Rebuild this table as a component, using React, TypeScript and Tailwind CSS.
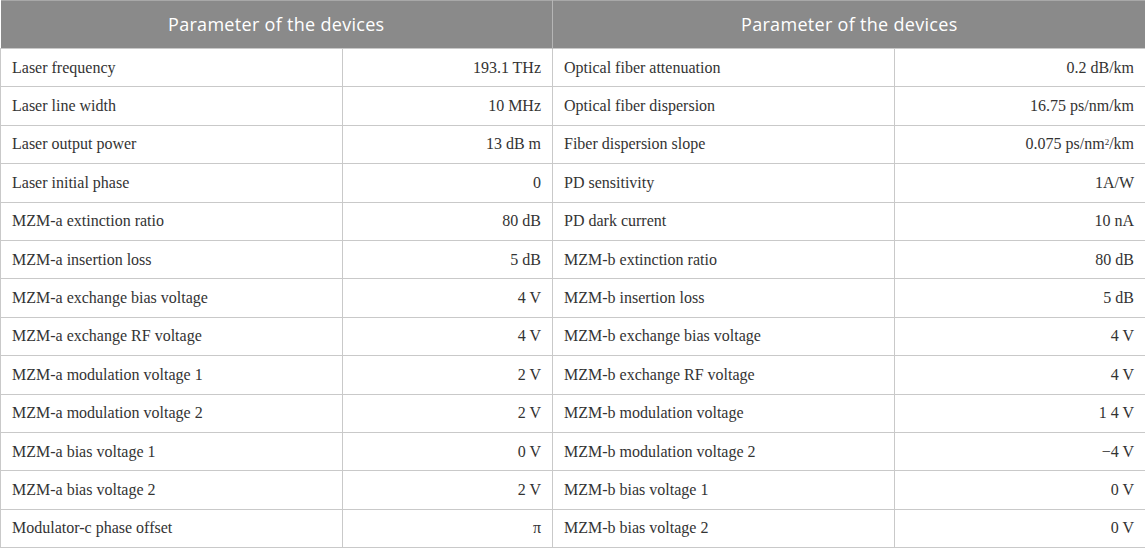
const rows: [string, string, string, React.ReactNode][] = [
  ['Laser frequency', '193.1 THz', 'Optical fiber attenuation', '0.2 dB/km'],
  ['Laser line width', '10 MHz', 'Optical fiber dispersion', '16.75 ps/nm/km'],
  [
    'Laser output power',
    '13 dB m',
    'Fiber dispersion slope',
    <>
      0.075 ps/nm<sup className="text-[9px]">2</sup>/km
    </>,
  ],
  ['Laser initial phase', '0', 'PD sensitivity', '1A/W'],
  ['MZM-a extinction ratio', '80 dB', 'PD dark current', '10 nA'],
  ['MZM-a insertion loss', '5 dB', 'MZM-b extinction ratio', '80 dB'],
  ['MZM-a exchange bias voltage', '4 V', 'MZM-b insertion loss', '5 dB'],
  ['MZM-a exchange RF voltage', '4 V', 'MZM-b exchange bias voltage', '4 V'],
  ['MZM-a modulation voltage 1', '2 V', 'MZM-b exchange RF voltage', '4 V'],
  ['MZM-a modulation voltage 2', '2 V', 'MZM-b modulation voltage', '1 4 V'],
  ['MZM-a bias voltage 1', '0 V', 'MZM-b modulation voltage 2', '\u22124 V'],
  ['MZM-a bias voltage 2', '2 V', 'MZM-b bias voltage 1', '0 V'],
  ['Modulator-c phase offset', '\u03c0', 'MZM-b bias voltage 2', '0 V'],
];

export default function App() {
  return (
    <div className="w-[1145px] h-[549px] bg-white overflow-hidden">
      <table className="w-[1145px] border-collapse table-fixed">
        <colgroup>
          <col className="w-[342px]" />
          <col className="w-[210px]" />
          <col className="w-[342px]" />
          <col className="w-[251px]" />
        </colgroup>
        <thead>
          <tr className="h-[48px] bg-[#8a8a8a]">
            <th
              colSpan={2}
              className="border-r border-[#b5b5b5] border-t border-t-[#a8a8a8] text-center font-normal text-white text-[18px] tracking-[0.3px]"
              style={{ fontFamily: '"Open Sans", "Noto Sans", sans-serif' }}
            >
              Parameter of the devices
            </th>
            <th
              colSpan={2}
              className="text-center border-t border-t-[#a8a8a8] font-normal text-white text-[18px] tracking-[0.3px]"
              style={{ fontFamily: '"Open Sans", "Noto Sans", sans-serif' }}
            >
              Parameter of the devices
            </th>
          </tr>
        </thead>
        <tbody
          className="text-[16px] text-[#333333]"
          style={{ fontFamily: '"Liberation Serif", "DejaVu Serif", serif' }}
        >
          {rows.map((r, i) => (
            <tr key={i} className="h-[38.4px]">
              <td className="border border-[#c9c9c9] px-[11px] text-left">{r[0]}</td>
              <td className="border border-[#c9c9c9] px-[11px] text-right">{r[1]}</td>
              <td className="border border-[#c9c9c9] px-[11px] text-left">{r[2]}</td>
              <td className="border border-[#c9c9c9] px-[11px] text-right">{r[3]}</td>
            </tr>
          ))}
        </tbody>
      </table>
    </div>
  );
}
